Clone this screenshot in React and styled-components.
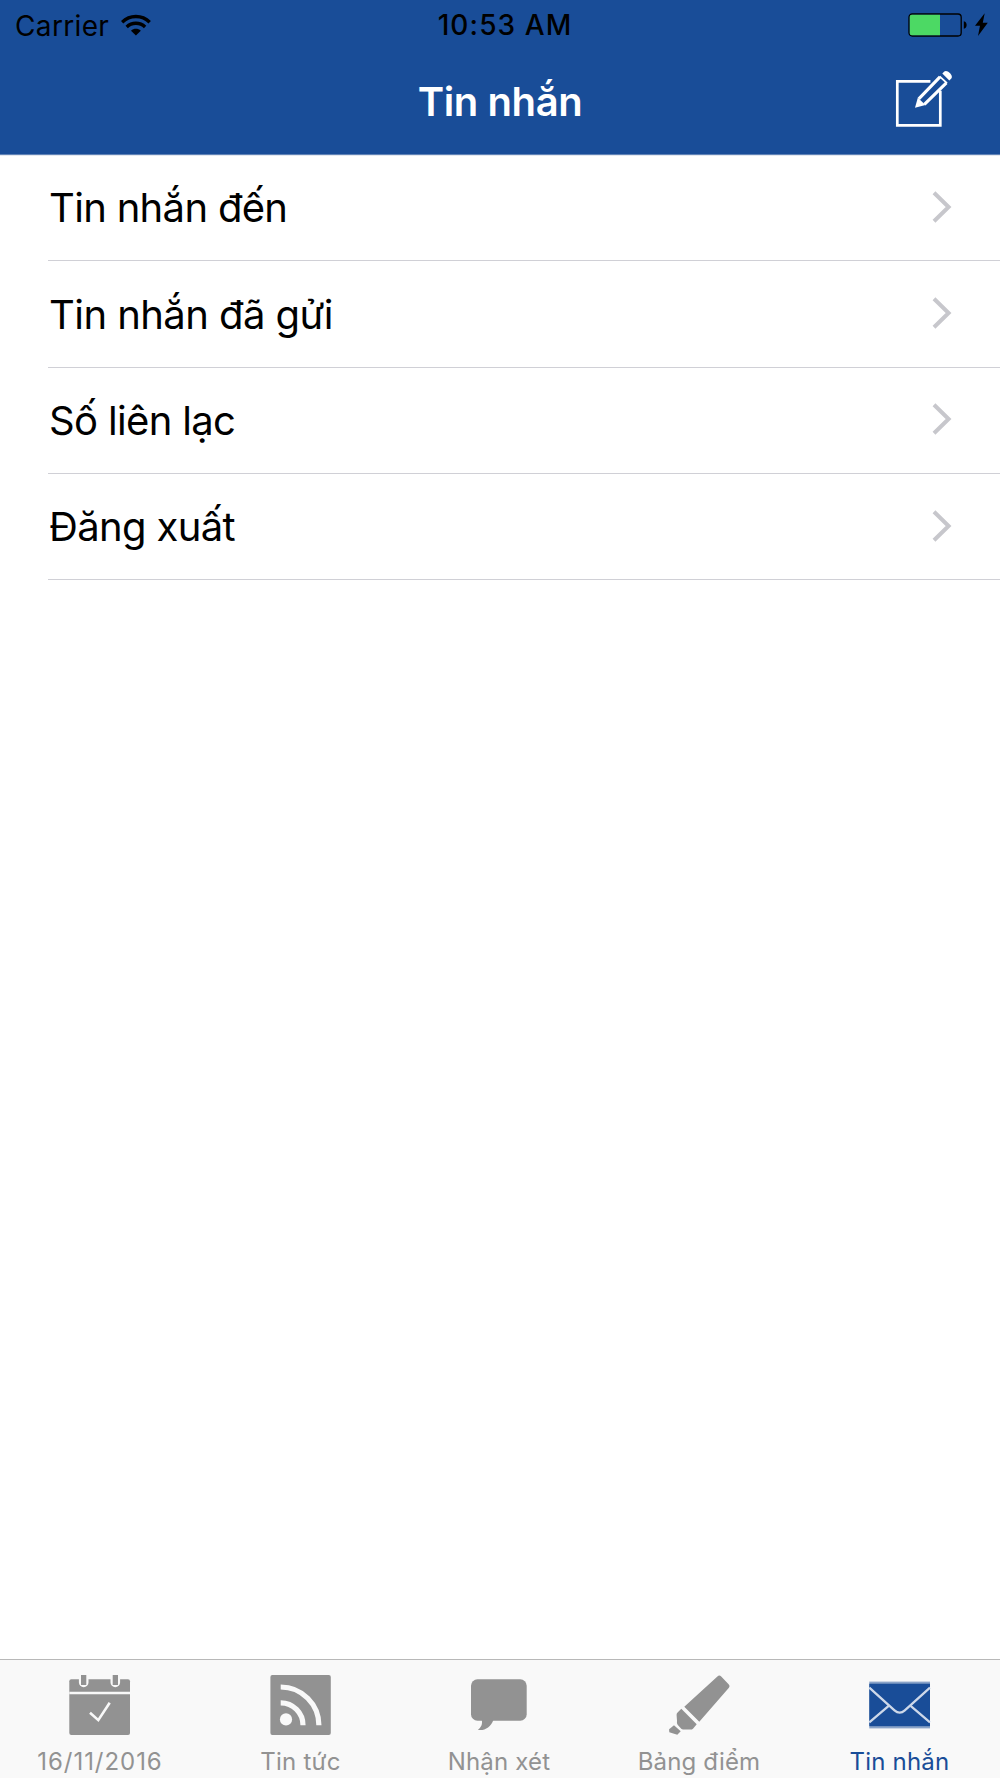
import React from 'react';
import styled, { createGlobalStyle } from 'styled-components';

const GlobalStyle = createGlobalStyle`
  * {
    box-sizing: border-box;
  }

  body {
    margin: 0;
    background: #fff;
    font-family: Inter, 'Liberation Sans', sans-serif;
    color: #000;
  }

  svg {
    display: block;
    flex: none;
  }
`;

const Screen = styled.div`
  display: flex;
  flex-direction: column;
  width: 1000px;
  height: 1778px;
  overflow: hidden;
`;

const Header = styled.header`
  height: 156px;
  background: #194d98;
  border-bottom: 1px solid #e3e7ef;
  box-shadow: inset 0 -1px 0 #5f82b6;
`;

const StatusBar = styled.div`
  display: grid;
  grid-template-columns: 1fr auto 1fr;
  align-items: center;
  height: 50px;
  padding: 0 11px 0 15px;
`;

const Carrier = styled.div`
  display: flex;
  align-items: center;
  gap: 12px;
  font-size: 28px;
  line-height: 50px;
  letter-spacing: 0.35px;

  svg {
    margin-bottom: 2px;
  }
`;

const Clock = styled.div`
  padding-left: 6px;
  font-size: 28px;
  font-weight: 500;
  line-height: 51px;
  letter-spacing: 1.1px;
`;

const Power = styled.div`
  display: flex;
  justify-content: flex-end;
  padding-bottom: 2px;
`;

const NavBar = styled.div`
  display: grid;
  grid-template-columns: 1fr auto 1fr;
  align-items: center;
  height: 103px;
`;

const Title = styled.h1`
  grid-column: 2;
  margin: 0;
  font-size: 40px;
  font-weight: 600;
  line-height: 60px;
  letter-spacing: -0.4px;
  color: #fff;
`;

const ComposeButton = styled.button`
  justify-self: end;
  margin: 0 46px 5px 0;
  padding: 0;
  border: 0;
  background: none;
`;

const Menu = styled.ul`
  flex: 1;
  margin: 0;
  padding: 0 0 0 48px;
  list-style: none;
`;

const MenuItem = styled.li`
  display: flex;
  align-items: center;
  justify-content: space-between;
  height: 106.3px;
  padding: 0 48px 0 1px;
  border-bottom: 1px solid #d0d0d6;
  font-size: 40px;
  letter-spacing: ${(props) => props.$spacing}px;

  &:first-child {
    height: 105.4px;
    padding-bottom: 1.6px;
  }

  svg {
    margin-bottom: 2px;
  }

  &:first-child svg {
    margin-bottom: 0;
  }
`;

const TabBar = styled.nav`
  display: grid;
  grid-template-columns: repeat(5, 200px);
  height: 119px;
  background: #f9f9f9;
  border-top: 1px solid #b8b8b8;
`;

const Tab = styled.a`
  display: flex;
  flex-direction: column;
  align-items: center;
  padding-top: 13px;
  color: ${(props) => (props.$active ? '#194d98' : '#929292')};
`;

const TabLabel = styled.span`
  margin-top: 9px;
  margin-left: ${(props) => props.$shift || 0}px;
  font-size: 24px;
  line-height: 31px;
  white-space: nowrap;
  letter-spacing: ${(props) => props.$spacing}px;
`;

const WifiIcon = () => (
  <svg width="30" height="22" viewBox="0 0 30 22" fill="none" stroke="#000" strokeWidth="3.4">
    <path d="M1.1 8.2a19.6 19.6 0 0 1 27.6 0" />
    <path d="M5.7 13a13.2 13.2 0 0 1 18.4 0" />
    <path d="M14.9 21.6l-4.9-4.9c2.8-2.6 7-2.6 9.8 0z" fill="#000" stroke="none" />
  </svg>
);

const BatteryIcon = () => (
  <svg width="81" height="26" viewBox="0 0 81 26">
    <rect x="1" y="2" width="52.2" height="22" rx="3.2" fill="none" stroke="#000" strokeWidth="1.3" />
    <path d="M3.6 2.7H32v20.6H3.6a1.8 1.8 0 0 1-1.8-1.8v-17a1.8 1.8 0 0 1 1.8-1.8z" fill="#4cd964" />
    <path d="M55.8 9.2c3.8.6 3.8 7 0 7.6z" />
    <path d="M76.7 1.3L67 13.8h5L70 24l9.8-13.2h-5z" />
  </svg>
);

const ComposeIcon = () => (
  <svg width="60" height="62" viewBox="0 0 60 62" fill="none" stroke="#fff">
    <path d="M36.4 13.4H3.3v43.9h43V22.7" strokeWidth="2.7" />
    <path d="M46 8.9L24.8 30.8M52.4 14.8L30.4 36.3" strokeWidth="3.1" />
    <path d="M45.6 8.3l7.4 6.8" strokeWidth="1.8" />
    <path d="M21 39.7l2.8-10 7.7 7.2z" fill="#fff" stroke="none" />
    <path d="M48.3 5.6l2-2c2.7-2.4 9.6 3.8 7 7l-2 2z" fill="#fff" stroke="none" />
  </svg>
);

const Chevron = () => (
  <svg width="20" height="32" viewBox="0 0 20 32" fill="none" stroke="#c7c7cc" strokeWidth="4">
    <path d="M2 1.8L16.6 16 2 30.2" />
  </svg>
);

const TabIcon = ({ children }) => (
  <svg width="64" height="64" viewBox="0 0 64 64" fill="currentColor">
    {children}
  </svg>
);

const CalendarIcon = () => (
  <TabIcon>
    <rect x="1.3" y="6.3" width="60.7" height="55.7" rx="2" />
    <g fill="none" stroke="#f9f9f9">
      <path d="M1.3 20H62" strokeWidth="2.4" />
      <path d="M15.7 4v5.4M47.3 4v5.4" strokeWidth="9.6" strokeLinecap="round" />
      <path d="M22 39.7l8.3 7.4 11.4-17.4" strokeWidth="2.6" />
    </g>
    <path d="M13 2h5.3v10H13zM44.7 2H50v10h-5.3z" />
  </TabIcon>
);

const FeedIcon = () => (
  <TabIcon>
    <rect x="2.4" y="2" width="60.4" height="60" rx="2" />
    <circle cx="18" cy="46.4" r="6.1" fill="#f9f9f9" />
    <g fill="none" stroke="#f9f9f9" strokeWidth="5.2">
      <path d="M12.7 29.8a22.3 22.3 0 0 1 22.3 22.5" />
      <path d="M12.7 14a38.2 38.2 0 0 1 38.2 38.3" />
    </g>
  </TabIcon>
);

const ChatIcon = () => (
  <TabIcon>
    <rect x="3" y="6.3" width="55.7" height="41.4" rx="6.5" />
    <path d="M13.8 47c.9 4.3-.8 7.6-4 9.8 6.2 1.5 13-2.6 15.6-9.8z" />
  </TabIcon>
);

const MarkerIcon = () => (
  <TabIcon>
    <path d="M16.3 33.7L49.4 3.4c1.3-1.3 2.5-1.3 3.8 0l7.4 7.8c1.2 1.2 1.2 2.4.1 3.7L31.3 48.7z" />
    <path d="M13.3 35.7l15.4 15.6-3.5 4.2c-.8.9-1.7 1.1-2.9 1.1l-5.3-.2c-1.7 0-2.7.3-4.2-1.2l-3-3.3c-1.2-1.3-.8-2.7-.8-4.3l-.4-5.4c0-1.3.3-2.1 1.2-3z" />
    <path d="M6 52.3l6.7 6-3.4 3.4-8-2.4-.2-3z" />
  </TabIcon>
);

const MailIcon = () => (
  <TabIcon>
    <rect x="1.3" y="8.6" width="60.7" height="46.8" opacity="0.5" />
    <rect x="1.3" y="10.7" width="60.7" height="42.5" />
    <g fill="none" stroke="#cdd8e9" strokeWidth="2.3">
      <path d="M1.3 14.6L26.5 37.4q5.2 4.5 10.3 0L62 14.6" />
      <path d="M1.3 49.3l19.4-16.4M62 49.3L42.6 32.9" />
    </g>
  </TabIcon>
);

const menu = [
  { label: 'Tin nhắn đến', spacing: -0.68 },
  { label: 'Tin nhắn đã gửi', spacing: -0.56 },
  { label: 'Số liên lạc', spacing: -0.66 },
  { label: 'Đăng xuất', spacing: -0.65 },
];

const tabs = [
  { label: '16/11/2016', icon: CalendarIcon, spacing: 0.95 },
  { label: 'Tin tức', icon: FeedIcon, spacing: 0.25, shift: 1 },
  { label: 'Nhận xét', icon: ChatIcon, spacing: 0.2, shift: -2 },
  { label: 'Bảng điểm', icon: MarkerIcon, spacing: 0.15, shift: -2 },
  { label: 'Tin nhắn', icon: MailIcon, spacing: 0.2, shift: -1, active: true },
];

const App = () => {
  return (
    <Screen>
      <GlobalStyle />
      <Header>
        <StatusBar>
          <Carrier>
            Carrier
            <WifiIcon />
          </Carrier>
          <Clock>10:53 AM</Clock>
          <Power>
            <BatteryIcon />
          </Power>
        </StatusBar>
        <NavBar>
          <Title>Tin nhắn</Title>
          <ComposeButton aria-label="Soạn tin">
            <ComposeIcon />
          </ComposeButton>
        </NavBar>
      </Header>
      <Menu>
        {menu.map((item) => (
          <MenuItem key={item.label} $spacing={item.spacing}>
            {item.label}
            <Chevron />
          </MenuItem>
        ))}
      </Menu>
      <TabBar>
        {tabs.map(({ label, icon: Icon, spacing, shift, active }) => (
          <Tab key={label} $active={active}>
            <Icon />
            <TabLabel $spacing={spacing} $shift={shift}>
              {label}
            </TabLabel>
          </Tab>
        ))}
      </TabBar>
    </Screen>
  );
};

export default App;
